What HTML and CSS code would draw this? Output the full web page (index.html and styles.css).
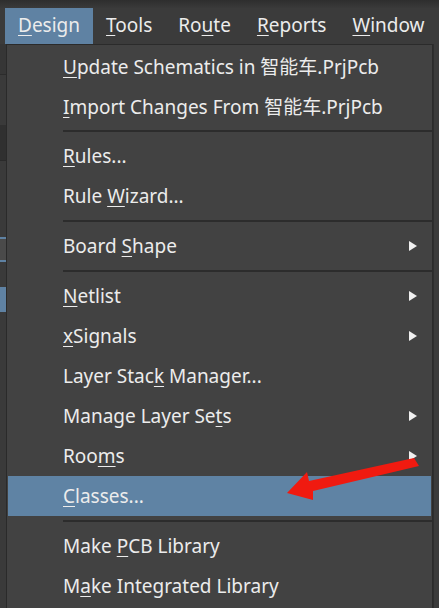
FILE: index.html
```html
<!DOCTYPE html>
<html>
<head>
<meta charset="utf-8">
<link rel="stylesheet" href="styles.css">
</head>
<body>
<div class="app">
  <div class="topstrip"></div>
  <div class="menubar">
    <div class="mb-item active"><u>D</u>esign</div>
    <div class="mb-item"><u>T</u>ools</div>
    <div class="mb-item">Ro<u>u</u>te</div>
    <div class="mb-item"><u>R</u>eports</div>
    <div class="mb-item"><u>W</u>indow</div>
  </div>
  <div class="main">
    <div class="leftstrip">
      <div class="ls-a"></div>
      <div class="ls-b"></div>
      <div class="ls-c"></div>
      <div class="ls-d"></div>
      <div class="ls-box"></div>
      <div class="ls-gap"></div>
      <div class="ls-blue"></div>
    </div>
    <div class="dropdown">
      <div class="item"><span><u>U</u>pdate Schematics in 智能车.PrjPcb</span></div>
      <div class="item"><span><u>I</u>mport Changes From 智能车.PrjPcb</span></div>
      <div class="sep"></div>
      <div class="item"><span><u>R</u>ules...</span></div>
      <div class="item"><span>Rule <u>W</u>izard...</span></div>
      <div class="sep"></div>
      <div class="item sub"><span>Board <u>S</u>hape</span><i class="tri"></i></div>
      <div class="sep"></div>
      <div class="item sub"><span><u>N</u>etlist</span><i class="tri"></i></div>
      <div class="item sub"><span><u>x</u>Signals</span><i class="tri"></i></div>
      <div class="item"><span>Layer Stac<u>k</u> Manager...</span></div>
      <div class="item sub"><span>Manage Layer Se<u>t</u>s</span><i class="tri"></i></div>
      <div class="item sub"><span>Roo<u>m</u>s</span><i class="tri"></i></div>
      <div class="item hl"><span><u>C</u>lasses...</span></div>
      <div class="sep"></div>
      <div class="item"><span>Make <u>P</u>CB Library</span></div>
      <div class="item"><span>M<u>a</u>ke Integrated Library</span></div>
    </div>
    <div class="rightstrip"></div>
  </div>
  <svg class="redarrow" width="439" height="608" viewBox="0 0 439 608">
    <polygon points="287,493 307,472 309,481 414,458 419,466 313,491 313,500" fill="#f01a10"/>
  </svg>
</div>
</body>
</html>
```
FILE: styles.css
```css
html, body {
  margin: 0;
  padding: 0;
  background: #3a3a3a;
}
.app {
  position: relative;
  width: 439px;
  height: 608px;
  overflow: hidden;
  font-family: "Noto Sans", "Noto Sans CJK SC", sans-serif;
  font-size: 19px;
  color: #ececec;
  display: flex;
  flex-direction: column;
}
u {
  text-decoration-thickness: 1px;
  text-underline-offset: 3px;
}
.topstrip {
  height: 8px;
  background: linear-gradient(#2e2e2e, #3a3a3a);
  flex: none;
}
.menubar {
  height: 36px;
  flex: none;
  display: flex;
  padding-left: 5px;
  background: #3b3b3b;
}
.mb-item {
  height: 36px;
  line-height: 34px;
  padding: 0 13px;
}
.mb-item.active {
  background: #5f82a3;
}
.main {
  flex: 1;
  display: flex;
}
.leftstrip {
  width: 6px;
  flex: none;
  background: #3a3a3a;
  border-right: 1px solid #2a2a2a;
  display: flex;
  flex-direction: column;
}
.ls-a { height: 30px; flex: none; border-bottom: 1px solid #2c2c2c; background: #363636; }
.ls-b { height: 50px; flex: none; }
.ls-c { height: 35px; flex: none; background: #303030; border-bottom: 1px solid #2a2a2a; }
.ls-d { height: 76px; flex: none; }
.ls-box { height: 21px; flex: none; background: #4a4a4a; border-top: 2px solid #5f82a3; border-bottom: 2px solid #5f82a3; }
.ls-gap { height: 25px; flex: none; }
.ls-blue { height: 25px; flex: none; background: #5f82a3; }
.dropdown {
  width: 425px;
  flex: none;
  background: #424242;
  border-top: 1px solid #2b2b2b;
  border-right: 1px solid #2b2b2b;
  padding-top: 1px;
  display: flex;
  flex-direction: column;
}
.item {
  height: 40px;
  flex: none;
  display: flex;
  align-items: center;
  justify-content: space-between;
  padding-left: 56px;
  padding-right: 15px;
  white-space: nowrap;
}
.item.hl {
  background: #5f83a4;
  margin: 0 1px;
  padding-left: 55px;
}
.sep {
  height: 10px;
  flex: none;
  display: flex;
  align-items: center;
  margin-left: 56px;
}
.sep::before {
  content: "";
  display: block;
  width: 100%;
  height: 2px;
  background: #2c2c2c;
}
.tri {
  width: 0;
  height: 0;
  border-top: 5px solid transparent;
  border-bottom: 5px solid transparent;
  border-left: 8px solid #f0f0f0;
}
.rightstrip {
  flex: 1;
  background: #3b3b3b;
  border-left: 1px solid #2e2e2e;
}
.redarrow {
  position: absolute;
  left: 0;
  top: 0;
  pointer-events: none;
}
```
